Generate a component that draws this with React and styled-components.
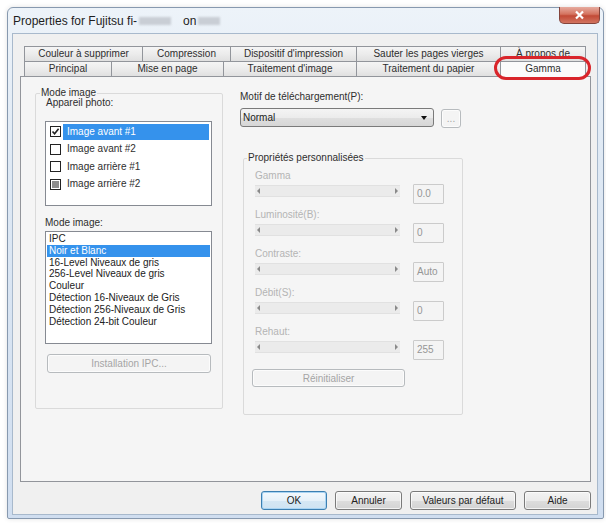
import React from 'react';
import styled, { createGlobalStyle } from 'styled-components';

const GlobalStyle = createGlobalStyle`
  html, body {
    margin: 0;
    padding: 0;
    background: #fff;
  }
  body {
    font-family: "Liberation Sans", Arial, sans-serif;
    font-size: 10px;
    color: #2e2e2e;
  }
  * {
    box-sizing: border-box;
  }
`;

const Page = styled.div`
  width: 606px;
  height: 523px;
  padding: 7px 0 0 7px;
  background: #fff;
`;

const Window = styled.div`
  width: 597px;
  height: 512px;
  border: 1px solid #8799af;
  border-radius: 6px 6px 2px 2px;
  background: linear-gradient(180deg, #edf3f9 0%, #dfe9f4 30%, #d0def0 100%);
  box-shadow: 0 0 5px rgba(0, 0, 0, 0.12);
  display: flex;
  flex-direction: column;
`;

const TitleBar = styled.div`
  height: 25px;
  display: flex;
  align-items: center;
  padding-left: 5px;
`;

const Title = styled.span`
  font-size: 12px;
  color: #1e1e1e;
  white-space: nowrap;
`;

const Blurred = styled.span`
  display: inline-block;
  width: ${(p) => p.$w}px;
  height: 8px;
  margin: 0 ${(p) => p.$gap}px 0 2px;
  vertical-align: middle;
  background: #c9ced5;
  filter: blur(1.2px);
`;

const CloseButton = styled.div`
  margin-left: auto;
  margin-right: 3px;
  align-self: flex-start;
  margin-top: -1px;
  width: 41px;
  height: 17px;
  border: 1px solid #84443b;
  border-top: none;
  border-radius: 0 0 5px 5px;
  background: linear-gradient(180deg, #e6ab9f 0%, #d4735f 45%, #c24a36 55%, #d27460 100%);
  display: flex;
  align-items: center;
  justify-content: center;
`;

const Client = styled.div`
  flex: 1;
  margin: 0 5px 3px 4px;
  border: 1px solid #a8b9cc;
  background: #f0f0f0;
  display: flex;
  flex-direction: column;
  padding: 12px 6px 4px 7px;
`;

const TabRow = styled.div`
  display: flex;
  margin-left: 4px;
  height: 15px;
`;

const Tab = styled.div`
  position: relative;
  width: ${(p) => p.$w}px;
  flex: none;
  height: ${(p) => (p.$active ? 16 : 15)}px;
  margin-right: -1px;
  border: 1px solid #92959b;
  border-bottom: none;
  background: ${(p) =>
    p.$active ? '#fbfbfb' : 'linear-gradient(180deg, #f5f5f5 0%, #ececec 50%, #e0e0e0 100%)'};
  text-align: center;
  line-height: 14px;
  color: #2e2e2e;
  white-space: nowrap;
  z-index: ${(p) => (p.$active ? 2 : 1)};
`;

const Ring = styled.div`
  position: absolute;
  left: -7px;
  right: -6px;
  top: -6px;
  bottom: -3px;
  border: 3px solid #d9252b;
  border-radius: 12px;
  pointer-events: none;
`;

const Panel = styled.div`
  height: 406px;
  border: 1px solid #92959b;
  background: #f5f5f5;
  display: flex;
  align-items: flex-start;
  gap: 17px;
  padding: 10px 0 0 14px;
`;

const Group = styled.fieldset`
  margin: ${(p) => p.$margin || 0};
  padding: 0;
  min-width: 0;
  width: ${(p) => p.$w}px;
  border: 1px solid #dadada;
  border-radius: 2px;
`;

const Legend = styled.legend`
  margin-left: ${(p) => p.$offset}px;
  padding: 0 1px;
  line-height: 12px;
  color: #2e2e2e;
`;

const GroupBody = styled.div`
  padding: ${(p) => p.$pad};
  display: flex;
  flex-direction: column;
  align-items: flex-start;
`;

const Label = styled.div`
  line-height: 12px;
  margin-top: ${(p) => p.$mt || 0}px;
  margin-left: ${(p) => p.$ml || 0}px;
  color: ${(p) => (p.$disabled ? '#b4b4b4' : '#2e2e2e')};
  white-space: nowrap;
`;

const CheckList = styled.div`
  width: 167px;
  height: 85px;
  margin-top: 12px;
  border: 1px solid #868a92;
  background: #fff;
  padding: 1px 2px 1px 1px;
`;

const CheckRow = styled.div`
  height: 17.5px;
  display: flex;
  align-items: center;
`;

const Box = styled.div`
  width: 11px;
  height: 11px;
  margin-left: 3px;
  flex: none;
  border: 1px solid #222;
  background: #fff;
  display: flex;
  align-items: center;
  justify-content: center;
  &::after {
    content: '';
    display: ${(p) => (p.$state === 'mixed' ? 'block' : 'none')};
    width: 7px;
    height: 7px;
    background: #8c8c8c;
  }
`;

const CheckText = styled.div`
  flex: 1;
  height: 16px;
  margin-left: 2px;
  padding-left: 4px;
  line-height: 16px;
  background: ${(p) => (p.$selected ? '#3592ec' : 'transparent')};
  color: ${(p) => (p.$selected ? '#fff' : '#2e2e2e')};
  white-space: nowrap;
`;

const ListBox = styled.div`
  width: 167px;
  height: 113px;
  margin-top: 2px;
  border: 1px solid #868a92;
  background: #fff;
  padding: 1px;
`;

const ListItem = styled.div`
  line-height: 11.8px;
  padding-left: 2px;
  background: ${(p) => (p.$selected ? '#3592ec' : 'transparent')};
  color: ${(p) => (p.$selected ? '#fff' : '#222')};
  white-space: nowrap;
`;

const Button = styled.div`
  width: ${(p) => p.$w}px;
  height: ${(p) => p.$h || 19}px;
  margin: ${(p) => p.$margin || 0};
  flex: none;
  border: 1px solid ${(p) => (p.$disabled ? '#b7bbbe' : p.$default ? '#3c7fb1' : '#7a7a7a')};
  border-radius: 3px;
  background: ${(p) =>
    p.$disabled
      ? '#f4f4f4'
      : p.$default
        ? 'linear-gradient(180deg, #f4f9fd 0%, #e6f1f9 50%, #d5e7f4 51%, #cfe3f2 100%)'
        : 'linear-gradient(180deg, #f3f3f3 0%, #ebebeb 50%, #dddddd 51%, #d3d3d3 100%)'};
  box-shadow: ${(p) => (p.$default ? 'inset 0 0 0 1px #a9d4f3' : 'inset 0 0 0 1px rgba(255,255,255,0.7)')};
  color: ${(p) => (p.$disabled ? '#a5a5a5' : '#222')};
  display: flex;
  align-items: center;
  justify-content: center;
  white-space: nowrap;
`;

const RightColumn = styled.div`
  padding-top: 4px;
  width: 222px;
  display: flex;
  flex-direction: column;
`;

const ComboRow = styled.div`
  display: flex;
  align-items: flex-start;
  margin-top: 5px;
`;

const Combo = styled.div`
  width: 194px;
  height: 19px;
  border: 1px solid #7a7a7a;
  border-radius: 3px;
  background: linear-gradient(180deg, #f4f4f4 0%, #ececec 50%, #dfdfdf 51%, #d6d6d6 100%);
  display: flex;
  align-items: center;
  padding: 0 6px 0 2px;
  color: #222;
`;

const ComboArrow = styled.span`
  margin-left: auto;
  width: 0;
  height: 0;
  border-left: 3.5px solid transparent;
  border-right: 3.5px solid transparent;
  border-top: 4px solid #111;
`;

const SliderRow = styled.div`
  display: flex;
  align-items: flex-start;
  height: 21px;
  margin-top: 1px;
`;

const Track = styled.div`
  width: 145px;
  height: 12px;
  margin-top: 2px;
  background: #ebebeb;
  border-top: 1px solid #e1e1e1;
  border-bottom: 1px solid #e1e1e1;
  display: flex;
  align-items: center;
  justify-content: space-between;
  padding: 0 2px;
`;

const Arrow = styled.span`
  width: 0;
  height: 0;
  border-top: 3.5px solid transparent;
  border-bottom: 3.5px solid transparent;
  ${(p) => (p.$dir === 'left' ? 'border-right: 3.5px solid #8a8a8a;' : 'border-left: 3.5px solid #8a8a8a;')}
`;

const Edit = styled.div`
  width: 31px;
  height: 20px;
  margin: 1px 0 0 13px;
  border: 1px solid #cbcbcb;
  border-radius: 1px;
  background: #f4f4f4;
  color: #969696;
  line-height: 18px;
  padding-left: 3px;
`;

const ButtonBar = styled.div`
  display: flex;
  justify-content: flex-end;
  gap: 8px;
  margin-top: 9px;
`;

const topTabs = [
  ['Couleur à supprimer', 119],
  ['Compression', 89],
  ["Dispositif d'impression", 127],
  ['Sauter les pages vierges', 145],
  ['À propos de', 86],
];

const bottomTabs = [
  ['Principal', 88],
  ['Mise en page', 113],
  ["Traitement d'image", 134],
  ['Traitement du papier', 145],
  ['Gamma', 86],
];

const cameras = [
  ['Image avant #1', 'checked', true],
  ['Image avant #2', 'empty', false],
  ['Image arrière #1', 'empty', false],
  ['Image arrière #2', 'mixed', false],
];

const modes = [
  'IPC',
  'Noir et Blanc',
  '16-Level Niveaux de gris',
  '256-Level Niveaux de gris',
  'Couleur',
  'Détection 16-Niveaux de Gris',
  'Détection 256-Niveaux de Gris',
  'Détection 24-bit Couleur',
];

const sliders = [
  ['Gamma', '0.0'],
  ['Luminosité(B):', '0'],
  ['Contraste:', 'Auto'],
  ['Débit(S):', '0'],
  ['Rehaut:', '255'],
];

function CheckMark() {
  return (
    <svg width="9" height="9" viewBox="0 0 9 9">
      <path d="M1.5 4.5 L3.6 6.8 L7.6 1.8" fill="none" stroke="#222" strokeWidth="1.6" />
    </svg>
  );
}

function App() {
  return (
    <Page>
      <GlobalStyle />
      <Window>
        <TitleBar>
          <Title>
            Properties for Fujitsu fi-
            <Blurred $w={32} $gap={12} />
            on
            <Blurred $w={22} $gap={0} />
          </Title>
          <CloseButton>
            <svg width="11" height="10" viewBox="0 0 11 10">
              <path d="M2 1.5 L9 8.5 M9 1.5 L2 8.5" stroke="#fff" strokeWidth="2.2" />
            </svg>
          </CloseButton>
        </TitleBar>
        <Client>
          <TabRow>
            {topTabs.map(([name, w]) => (
              <Tab key={name} $w={w}>
                {name}
              </Tab>
            ))}
          </TabRow>
          <TabRow>
            {bottomTabs.map(([name, w]) => (
              <Tab key={name} $w={w} $active={name === 'Gamma'}>
                {name}
                {name === 'Gamma' && <Ring />}
              </Tab>
            ))}
          </TabRow>
          <Panel>
            <Group $w={188}>
              <Legend $offset={4}>Mode image</Legend>
              <GroupBody $pad="0 9px 35px 9px">
                <Label $mt={-2} $ml={1}>Appareil photo:</Label>
                <CheckList>
                  {cameras.map(([name, state, selected]) => (
                    <CheckRow key={name}>
                      <Box $state={state}>{state === 'checked' && <CheckMark />}</Box>
                      <CheckText $selected={selected}>{name}</CheckText>
                    </CheckRow>
                  ))}
                </CheckList>
                <Label $mt={11}>Mode image:</Label>
                <ListBox>
                  {modes.map((m) => (
                    <ListItem key={m} $selected={m === 'Noir et Blanc'}>
                      {m}
                    </ListItem>
                  ))}
                </ListBox>
                <Button $w={164} $disabled $margin="10px 0 0 2px">
                  Installation IPC...
                </Button>
              </GroupBody>
            </Group>
            <RightColumn>
              <Label>Motif de téléchargement(P):</Label>
              <ComboRow>
                <Combo>
                  Normal
                  <ComboArrow />
                </Combo>
                <Button $w={20} $disabled $margin="1px 0 0 7px">
                  ...
                </Button>
              </ComboRow>
              <Group $w={220} $margin="24px 0 0 3px">
                <Legend $offset={3}>Propriétés personnalisées</Legend>
                <GroupBody $pad="6px 0 27px 11px">
                  {sliders.map(([name, value], i) => (
                    <React.Fragment key={name}>
                      <Label $disabled $mt={i === 0 ? 0 : 5}>
                        {name}
                      </Label>
                      <SliderRow>
                        <Track>
                          <Arrow $dir="left" />
                          <Arrow $dir="right" />
                        </Track>
                        <Edit>{value}</Edit>
                      </SliderRow>
                    </React.Fragment>
                  ))}
                  <Button $w={153} $h={18} $disabled $margin="9px 0 0 -3px">
                    Réinitialiser
                  </Button>
                </GroupBody>
              </Group>
            </RightColumn>
          </Panel>
          <ButtonBar>
            <Button $w={66} $default>
              OK
            </Button>
            <Button $w={67}>Annuler</Button>
            <Button $w={106}>Valeurs par défaut</Button>
            <Button $w={67}>Aide</Button>
          </ButtonBar>
        </Client>
      </Window>
    </Page>
  );
}

export default App;
